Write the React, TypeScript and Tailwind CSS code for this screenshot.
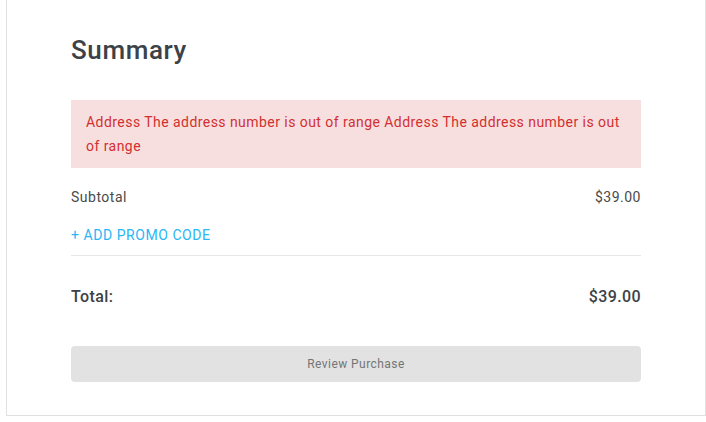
export default function App() {
  return (
    <div className="min-h-screen bg-white px-[6px] font-['Roboto',sans-serif]">
      <div className="w-[700px] border-x border-b border-[#e0e0e0] px-16 pt-[30px] pb-[33px]">
        <h2 className="text-[26px] leading-[40px] font-medium tracking-[0.6px] text-[#3c4248]">Summary</h2>

        <div className="mt-[30px] bg-[#f7dfdf] px-[15px] pt-[10px] pb-[10px] text-[14px] leading-[24px] tracking-[0.45px] text-[#d32f2f]">
          Address The address number is out of range Address The address number is out of range
        </div>

        <div className="mt-[19px] flex items-center justify-between text-[14px] leading-[20px] tracking-[0.5px] text-[#4a4a4a]">
          <span>Subtotal</span>
          <span>$39.00</span>
        </div>

        <button className="mt-[18px] block text-[14px] leading-[20px] tracking-[0.55px] text-[#29b6f6]">+ ADD PROMO CODE</button>

        <div className="mt-[10px] border-t border-[#e6e6e6]" />

        <div className="mt-[30px] flex items-center justify-between text-[16px] leading-[22px] font-medium tracking-[0.4px] text-[#3c4248]">
          <span>Total:</span>
          <span>$39.00</span>
        </div>

        <button
          disabled
          className="mt-[38px] h-[36px] w-full rounded-[4px] bg-[#e2e2e2] text-[12px] tracking-[0.45px] text-[#757575]"
        >
          Review Purchase
        </button>
      </div>
    </div>
  );
}
